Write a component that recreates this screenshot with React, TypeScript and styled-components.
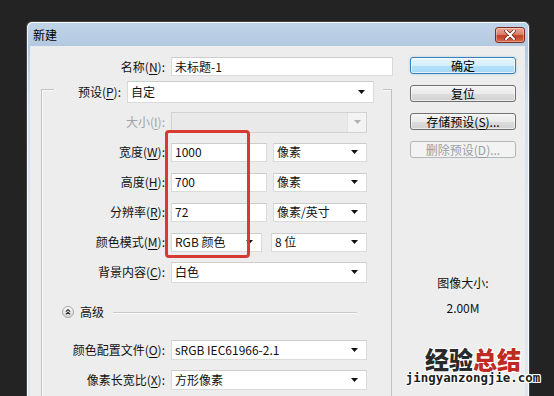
import React from 'react';
import styled, { createGlobalStyle } from 'styled-components';

const Global = createGlobalStyle`
  html, body { margin: 0; padding: 0; background: #232323; overflow: hidden; }
  body {
    width: 554px; height: 396px;
    font-family: "Noto Sans CJK SC", "Noto Sans", sans-serif;
    font-size: 12px; color: #111;
  }
  u { text-decoration: underline; text-underline-offset: 2px; }
`;

const Stage = styled.div`
  position: relative;
  width: 554px; height: 396px; overflow: hidden;
  box-sizing: border-box; padding: 21px 0 0 26px;
`;

const Window = styled.div`
  width: 504px; height: 420px; box-sizing: border-box;
  border: 1px solid #3e4348; border-bottom: none;
  border-radius: 6px 6px 0 0;
  background: linear-gradient(#c0d4e9, #b3c9e0 24px, #d2dfec 80px, #dfe6ee 200px);
  box-shadow: inset 1px 1px 0 rgba(255,255,255,0.85), inset -1px 0 0 rgba(255,255,255,0.8);
  padding: 0 4px 0 3px;
  display: flex; flex-direction: column;
`;

const TitleBar = styled.div`
  height: 24px; display: flex; justify-content: space-between; align-items: flex-start;
`;

const Title = styled.div`
  padding: 5px 0 0 3px; font-size: 12px; line-height: 16px; color: #000;
`;

const CloseBtn = styled.div`
  margin-top: 5px; width: 30px; height: 16px; box-sizing: border-box;
  border: 1px solid #7d2b1d; border-radius: 3px;
  background: linear-gradient(#eba594, #d9816c 45%, #c23e26 55%, #d46a50);
  box-shadow: inset 0 0 0 1px rgba(255,255,255,0.35);
  display: flex; align-items: center; justify-content: center;
`;

const Client = styled.div`
  flex: 1; background: #ededed;
  display: grid; grid-template-columns: 380px 106px;
  align-items: start; padding-top: 11px;
`;

const LeftCol = styled.div`
  display: flex; flex-direction: column;
`;

const Row = styled.div<{ $h?: number; $mt?: number }>`
  display: flex; align-items: center;
  height: ${p => p.$h ?? 30}px; margin-top: ${p => p.$mt ?? 0}px;
`;

const Label = styled.div<{ $w: number; $gap?: number; $disabled?: boolean }>`
  width: ${p => p.$w}px; flex: none; text-align: right; white-space: nowrap;
  margin-right: ${p => p.$gap ?? 6}px; line-height: 16px;
  color: ${p => (p.$disabled ? '#a3a3a3' : '#111')};
`;

const Field = styled.div<{ $w: number; $h?: number }>`
  width: ${p => p.$w}px; height: ${p => p.$h ?? 19}px; box-sizing: border-box; flex: none;
  background: #fff; border: 1px solid #dadada; border-top-color: #cdcdcd;
  display: flex; align-items: center; padding: 0 8px 0 3px;
  line-height: 16px; white-space: nowrap; color: #111;
`;

const FieldText = styled.span`
  flex: 1;
`;

const Spacer = styled.span<{ $w: number }>`
  width: ${p => p.$w}px; flex: none;
`;

const DisabledField = styled.div`
  width: 196px; height: 21px; box-sizing: border-box;
  background: #e9e9e9; border: 1px solid #d2d2d2;
  display: flex; justify-content: flex-end;
`;

const DisabledArrow = styled.div`
  width: 18px; background: #f3f3f3; border-left: 1px solid #e2e2e2;
  display: flex; align-items: center; justify-content: center;
`;

const Group = styled.div`
  position: relative;
  margin: 13px 0 0 11px; width: 351px; height: 330px; box-sizing: border-box;
  border: 1px solid #c2c2c2; border-bottom: none;
  box-shadow: inset 1px 1px 0 #fafafa;
`;

const LegendRow = styled.div`
  margin: -10px 0 0 12px; width: 329px; height: 23px;
  background: #ededed; display: flex; align-items: center;
`;

const AdvIcon = styled.div`
  margin-left: 20px; width: 12px; height: 12px; flex: none; display: flex;
`;

const AdvText = styled.div`
  margin-left: 6px; line-height: 16px;
`;

const Rule = styled.div`
  margin-left: 9px; width: 244px; height: 1px; background: #c9c9c9;
  box-shadow: 0 1px 0 #fbfbfb;
`;

const Highlight = styled.div`
  position: absolute; left: 123px; top: 40px;
  width: 85px; height: 128px; box-sizing: border-box;
  border: 3px solid #d63a31; border-radius: 4px;
`;

const RightCol = styled.div`
  display: flex; flex-direction: column; gap: 11px;
`;

const Button = styled.div<{ $variant?: 'default' | 'normal' | 'disabled' }>`
  height: 17px; box-sizing: border-box; border-radius: 3px;
  display: flex; align-items: center; justify-content: center;
  font-size: 12px; line-height: 14px; white-space: nowrap;
  border: 1px solid ${p => (p.$variant === 'default' ? '#3a7fb5' : p.$variant === 'disabled' ? '#b3b7ba' : '#6f6f6f')};
  color: ${p => (p.$variant === 'disabled' ? '#9d9d9d' : '#000')};
  background: ${p =>
    p.$variant === 'default'
      ? 'linear-gradient(#e8f6fd, #d2eefc 50%, #b6e2fa 51%, #a4d8f4)'
      : p.$variant === 'disabled'
      ? '#f3f3f3'
      : 'linear-gradient(#f4f4f4, #ebebeb 50%, #dddddd 51%, #d1d1d1)'};
  box-shadow: ${p =>
    p.$variant === 'default'
      ? 'inset 0 0 0 1px rgba(255,255,255,0.7), 0 0 2px rgba(80,170,230,0.6)'
      : p.$variant === 'disabled'
      ? 'none'
      : 'inset 0 0 0 1px rgba(255,255,255,0.6)'};
`;

const SizeInfo = styled.div`
  margin-top: 106px; text-align: center; line-height: 16px; color: #111;
`;

const SizeValue = styled.div`
  margin-top: 9px;
`;

const Watermark = styled.div`
  position: absolute; left: 405px; top: 347px; width: 136px;
  display: flex; flex-direction: column; align-items: center;
`;

const WmTitle = styled.div`
  font-size: 24px; line-height: 23px; height: 23px; font-weight: 900;
  text-shadow: 1px 0 #fff, -1px 0 #fff, 0 1px #fff, 0 -1px #fff, 1px 1px #fff, -1px -1px #fff, 1px -1px #fff, -1px 1px #fff;
`;

const WmPart = styled.span<{ $red?: boolean }>`
  color: ${p => (p.$red ? '#bf2b23' : '#2a2a2a')};
`;

const WmUrl = styled.div`
  margin-top: 1px;
  font-family: "DejaVu Sans Mono", monospace; font-weight: 700;
  font-size: 12.4px; line-height: 13px; height: 13px; color: #1c1c1c;
  text-shadow: 1px 0 #fff, -1px 0 #fff, 0 1px #fff, 0 -1px #fff, 1px 1px #fff, -1px -1px #fff, 1px -1px #fff, -1px 1px #fff;
`;

const Caret = ({ color = '#111' }: { color?: string }) => (
  <svg width="7" height="4" viewBox="0 0 7 4" style={{ flex: 'none' }}>
    <path d="M0 0 H7 L3.5 4 Z" fill={color} />
  </svg>
);

const Select = ({ w, h, text }: { w: number; h?: number; text: string }) => (
  <Field $w={w} $h={h}>
    <FieldText>{text}</FieldText>
    <Caret />
  </Field>
);

export default function App() {
  return (
    <>
      <Global />
      <Stage>
        <Window>
          <TitleBar>
            <Title>新建</Title>
            <CloseBtn>
              <svg width="12" height="10" viewBox="0 0 12 10">
                <path d="M2 1 L10 9 M10 1 L2 9" stroke="#6a2014" strokeWidth="3.4" strokeLinecap="round" />
                <path d="M2 1 L10 9 M10 1 L2 9" stroke="#fff" strokeWidth="2" strokeLinecap="round" />
              </svg>
            </CloseBtn>
          </TitleBar>
          <Client>
            <LeftCol>
              <Row $h={19}>
                <Label $w={135}>名称(<u>N</u>):</Label>
                <Field $w={222}>未标题-1</Field>
              </Row>
              <Group>
                <LegendRow>
                  <Label $w={67} $gap={6}>预设(<u>P</u>):</Label>
                  <Select w={247} h={22} text="自定" />
                </LegendRow>
                <Row $mt={4}>
                  <Label $w={123} $disabled>大小(<u>I</u>):</Label>
                  <DisabledField>
                    <DisabledArrow>
                      <Caret color="#b0b0b0" />
                    </DisabledArrow>
                  </DisabledField>
                </Row>
                <Row>
                  <Label $w={123}>宽度(<u>W</u>):</Label>
                  <Field $w={96}>1000</Field>
                  <Spacer $w={6} />
                  <Select w={94} text="像素" />
                </Row>
                <Row>
                  <Label $w={123}>高度(<u>H</u>):</Label>
                  <Field $w={96}>700</Field>
                  <Spacer $w={6} />
                  <Select w={94} text="像素" />
                </Row>
                <Row>
                  <Label $w={123}>分辨率(<u>R</u>):</Label>
                  <Field $w={96}>72</Field>
                  <Spacer $w={6} />
                  <Select w={94} text="像素/英寸" />
                </Row>
                <Row>
                  <Label $w={123}>颜色模式(<u>M</u>):</Label>
                  <Select w={91} text="RGB 颜色" />
                  <Spacer $w={9} />
                  <Select w={96} text="8 位" />
                </Row>
                <Row>
                  <Label $w={123}>背景内容(<u>C</u>):</Label>
                  <Select w={196} h={21} text="白色" />
                </Row>
                <Row $mt={10}>
                  <AdvIcon>
                    <svg width="12" height="12" viewBox="0 0 12 12">
                      <defs>
                        <linearGradient id="adv" x1="0" y1="0" x2="0" y2="1">
                          <stop offset="0" stopColor="#ffffff" />
                          <stop offset="1" stopColor="#d6d6d6" />
                        </linearGradient>
                      </defs>
                      <circle cx="6" cy="6" r="5.5" fill="url(#adv)" stroke="#a5a5a5" />
                      <path d="M3.8 5.6 L6 3.6 L8.2 5.6 M3.8 8.4 L6 6.4 L8.2 8.4" stroke="#333" strokeWidth="1.2" fill="none" />
                    </svg>
                  </AdvIcon>
                  <AdvText>高级</AdvText>
                  <Rule />
                </Row>
                <Row $mt={8}>
                  <Label $w={123}>颜色配置文件(<u>O</u>):</Label>
                  <Select w={196} h={20} text="sRGB IEC61966-2.1" />
                </Row>
                <Row>
                  <Label $w={123}>像素长宽比(<u>X</u>):</Label>
                  <Select w={196} h={20} text="方形像素" />
                </Row>
                <Highlight />
              </Group>
            </LeftCol>
            <RightCol>
              <Button $variant="default">确定</Button>
              <Button>复位</Button>
              <Button>存储预设(<u>S</u>)...</Button>
              <Button $variant="disabled">删除预设(<u>D</u>)...</Button>
              <SizeInfo>
                图像大小:
                <SizeValue>2.00M</SizeValue>
              </SizeInfo>
            </RightCol>
          </Client>
        </Window>
        <Watermark>
          <WmTitle>
            <WmPart>经验</WmPart>
            <WmPart $red>总结</WmPart>
          </WmTitle>
          <WmUrl>jingyanzongjie.com</WmUrl>
        </Watermark>
      </Stage>
    </>
  );
}
